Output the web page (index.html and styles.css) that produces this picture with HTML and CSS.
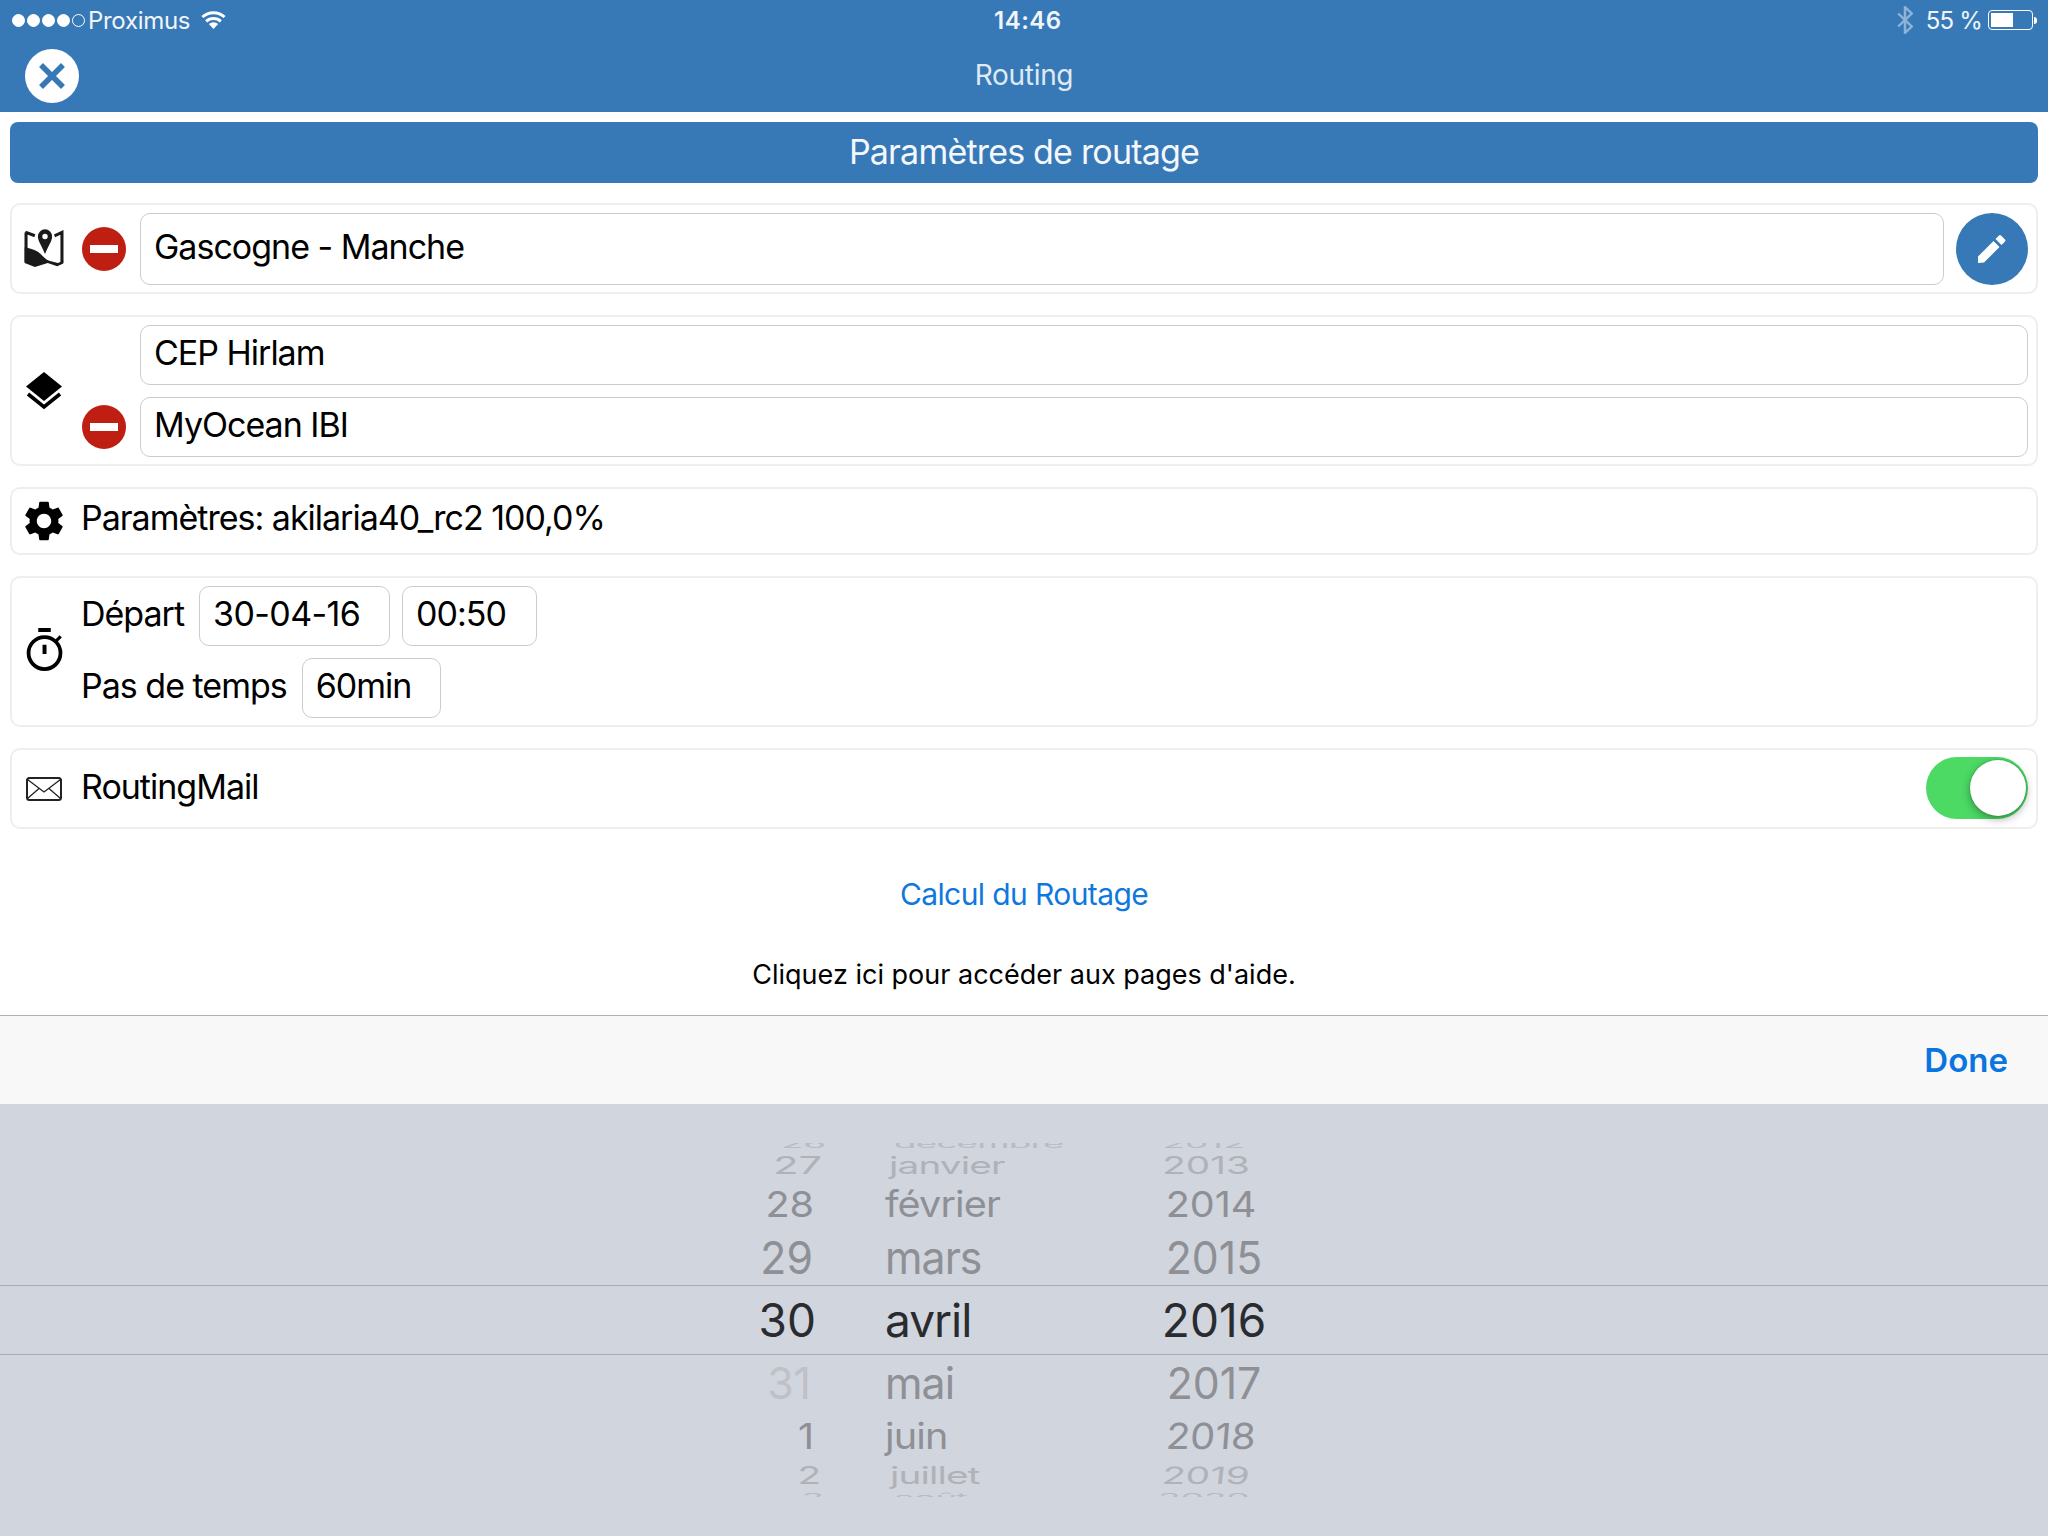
FILE: index.html
```html
<!DOCTYPE html>
<html lang="fr">
<head>
<meta charset="utf-8">
<title>Routing</title>
<link rel="stylesheet" href="styles.css">
</head>
<body>
<header class="header">
  <div class="status">
    <div class="status-left">
      <span class="signal"><i></i><i></i><i></i><i></i><i class="empty"></i></span>
      <span class="carrier">Proximus</span>
      <svg class="wifi" viewBox="0 0 25 18"><path d="M12.500 18L7.800 13a7 7 0 0 1 9.400 0z" fill="#fff"/><path d="M5.200 10.300a10.800 10.800 0 0 1 14.600 0M1.400 6a16.400 16.400 0 0 1 22.200 0" fill="none" stroke="#fff" stroke-width="3"/></svg>
    </div>
    <div class="clock">14:46</div>
    <div class="status-right">
      <svg class="bt" viewBox="1 1 13 26" preserveAspectRatio="none"><path d="M2 8l11 12-5.500 6V2l5.500 6L2 20" fill="none" stroke="#8fb2d6" stroke-width="2"/></svg>
      <span class="pct">55 %</span>
      <span class="battery"><span class="level"></span></span><span class="nub"></span>
    </div>
  </div>
  <div class="nav">
    <span class="close"><svg viewBox="0 0 54 54"><path d="M16 16l22 22M38 16L16 38" stroke="#3779b7" stroke-width="5.500" fill="none"/></svg></span>
    <span class="nav-title">Routing</span>
  </div>
</header>

<main class="main">
  <h1 class="banner">Paramètres de routage</h1>

  <section class="card row-card">
    <svg class="icon map" viewBox="30 24 118 118"><path d="M36 34v88M34 33l28 11M120 44l22-10v88" fill="none" stroke="#1a1a1a" stroke-width="9"/><path d="M32 78c13 3 28 6 40 14 12 8 18 20 32 26l26 6 16-6v8l-18 8-28-10-38 12-30-12z" fill="#1a1a1a"/><path d="M92 25a21 21 0 0 1 21 21c0 14-13 30-21 52-8-22-21-38-21-52a21 21 0 0 1 21-21zm0 13a8 8 0 1 0 0 16 8 8 0 0 0 0-16z" fill="#1a1a1a" fill-rule="evenodd"/></svg>
    <span class="minus"><i></i></span>
    <div class="field grow">Gascogne - Manche</div>
    <span class="edit"><svg viewBox="0 0 30 30"><path d="M1 22.500L16.500 7l6 6L7 28.500l-6 .5zM18.500 5l3.500-3.500a1.500 1.500 0 0 1 2 0l4 4a1.500 1.500 0 0 1 0 2L24.500 11z" fill="#fff"/></svg></span>
  </section>

  <section class="card layers-card">
    <svg class="icon layers" viewBox="0 0 36 38"><path d="M18 0l18 14.500L18 29 0 14.500z" fill="#000"/><path d="M2 22l16 13 16-13" fill="none" stroke="#000" stroke-width="3.600"/></svg>
    <div class="layers-rows">
      <div class="layer-row"><div class="field grow short">CEP Hirlam</div></div>
      <div class="layer-row"><span class="minus"><i></i></span><div class="field grow short">MyOcean IBI</div></div>
    </div>
  </section>

  <section class="card text-card">
    <svg class="icon gear" viewBox="2 1.500 20 21"><path fill-rule="evenodd" d="M19.140 12.940c.04-.3.06-.61.06-.94 0-.32-.02-.64-.07-.94l2.030-1.580c.18-.14.23-.41.12-.61l-1.920-3.320c-.12-.22-.37-.29-.59-.22l-2.390.96c-.5-.38-1.030-.7-1.620-.94l-.36-2.540c-.04-.24-.24-.41-.48-.41h-3.840c-.24 0-.43.17-.47.41l-.36 2.540c-.59.24-1.130.57-1.620.94l-2.390-.96c-.22-.08-.47 0-.59.22L2.740 8.870c-.12.21-.08.47.12.61l2.030 1.580c-.05.3-.09.63-.09.94s.02.64.07.94l-2.030 1.580c-.18.14-.23.41-.12.61l1.920 3.320c.12.22.37.29.59.22l2.390-.96c.5.38 1.030.7 1.620.94l.36 2.540c.05.24.24.41.48.41h3.840c.24 0 .44-.17.47-.41l.36-2.540c.59-.24 1.130-.56 1.620-.94l2.390.96c.22.08.47 0 .59-.22l1.920-3.320c.12-.22.07-.47-.12-.61l-2.010-1.580zM12 15.600c-1.980 0-3.600-1.620-3.600-3.600s1.620-3.600 3.600-3.600 3.600 1.620 3.600 3.600-1.620 3.600-3.600 3.600z" fill="#000"/></svg>
    <span class="label">Paramètres: akilaria40_rc2 100,0%</span>
  </section>

  <section class="card time-card">
    <svg class="icon watch" viewBox="0 0 38 46"><circle cx="19.500" cy="24" r="15.300" fill="none" stroke="#000" stroke-width="3.600"/><path d="M13.500 2h12M19.500 16v9" stroke="#000" stroke-width="3.800" fill="none"/><path d="M30 13l5-5" stroke="#000" stroke-width="3" fill="none"/></svg>
    <div class="time-rows">
      <div class="time-row"><span class="label">Départ</span><div class="field date">30-04-16</div><div class="field hour">00:50</div></div>
      <div class="time-row"><span class="label">Pas de temps</span><div class="field step">60min</div></div>
    </div>
  </section>

  <section class="card mail-card">
    <svg class="icon mail" viewBox="0 0 36 24"><rect x="1" y="1" width="34" height="22" rx="2.500" fill="none" stroke="#222" stroke-width="2"/><path d="M1.500 2.500L18 15 34.500 2.500M1.500 21.500L13 11.500M34.500 21.500L23 11.500" fill="none" stroke="#222" stroke-width="1.300"/></svg>
    <span class="label">RoutingMail</span>
    <span class="toggle"><span class="knob"></span></span>
  </section>

  <a class="action">Calcul du Routage</a>
  <p class="help">Cliquez ici pour accéder aux pages d'aide.</p>
</main>

<div class="toolbar"><span class="done">Done</span></div>

<div class="picker">
  <div class="wheel">
    <div class="col day">
      <div class="item lv4">26</div><div class="item lv3">27</div><div class="item lv2">28</div><div class="item lv1">29</div><div class="item sel">30</div><div class="item lv1b off">31</div><div class="item lv2b">1</div><div class="item lv3b">2</div><div class="item lv4b">3</div>
    </div>
    <div class="col month">
      <div class="item lv4">décembre</div><div class="item lv3">janvier</div><div class="item lv2">février</div><div class="item lv1">mars</div><div class="item sel">avril</div><div class="item lv1b">mai</div><div class="item lv2b">juin</div><div class="item lv3b">juillet</div><div class="item lv4b">août</div>
    </div>
    <div class="col year">
      <div class="item lv4">2012</div><div class="item lv3">2013</div><div class="item lv2">2014</div><div class="item lv1">2015</div><div class="item sel">2016</div><div class="item lv1b">2017</div><div class="item lv2b">2018</div><div class="item lv3b">2019</div><div class="item lv4b">2020</div>
    </div>
  </div>
  <div class="sel-lines"></div>
</div>
</body>
</html>
```
FILE: styles.css
```css
* { box-sizing: border-box; }
html, body { margin: 0; height: 100%; }
body {
  display: flex;
  flex-direction: column;
  height: 1536px;
  overflow: hidden;
  background: #fff;
  color: #000;
  font-family: Inter, "Liberation Sans", sans-serif;
}

/* header */
.header { background: #3779b7; color: #fff; height: 112px; }
.status { display: flex; align-items: center; justify-content: space-between; height: 40px; padding: 0 11px 0 12px; position: relative; font-size: 24px; }
.status-left, .status-right { display: flex; align-items: center; }
.signal { display: flex; gap: 2px; margin-right: 3px; }
.signal i { width: 13px; height: 13px; border-radius: 50%; background: #fff; border: 1px solid #fff; }
.signal i.empty { background: none; }
.carrier { color: #f1f5fa; letter-spacing: -.3px; }
.wifi { width: 25px; height: 18px; margin-left: 11px; }
.clock { font-weight: 600; font-size: 24px; position: absolute; left: 994px; letter-spacing: .5px; color: #f1f5fa; }
.bt { width: 16px; height: 28px; margin-right: 13px; }
.pct { margin-right: 6px; color: #f1f5fa; letter-spacing: -.8px; }
.battery { width: 45px; height: 20px; border: 1.500px solid #fff; border-radius: 4px; padding: 2px; display: block; }
.level { display: block; width: 22px; height: 100%; background: #fff; }
.nub { width: 3px; height: 7px; background: #fff; border-radius: 0 3px 3px 0; margin-left: 1px; }
.nav { position: relative; height: 72px; display: flex; align-items: center; justify-content: center; }
.close { position: absolute; left: 25px; top: 9px; width: 54px; height: 54px; border-radius: 50%; background: #fff; display: block; }
.close svg { display: block; width: 54px; height: 54px; }
.nav-title { font-size: 28px; color: #dfe9f3; margin-top: -2px; letter-spacing: -.3px; }

/* main */
.main { padding: 10px 10px 0; height: 903px; display: flex; flex-direction: column; }
.banner { margin: 0 0 20px; height: 61px; line-height: 60px; background: #3779b7; color: #f4f7fb; border-radius: 8px; text-align: center; font-size: 34px; font-weight: 400; letter-spacing: -.8px; }
.card { border: 2px solid #eeeeee; border-radius: 10px; margin-bottom: 21px; display: flex; align-items: center; padding-left: 12px; }
.icon { display: block; flex: none; }
.field { border: 1.500px solid #cccccc; border-radius: 10px; padding: 0 13px 4px; font-size: 34px; letter-spacing: -1px; display: flex; align-items: center; height: 60px; }
.grow { flex: 1; }
.label { font-size: 34px; letter-spacing: -1px; padding-bottom: 4px; }
.minus { width: 44px; height: 44px; border-radius: 50%; background: #bf1f12; display: flex; align-items: center; justify-content: center; flex: none; }
.minus i { width: 28px; height: 8px; background: #fff; display: block; }

.row-card { height: 91px; padding-right: 8px; }
.map { width: 40px; height: 40px; }
.row-card .minus { margin: 0 14px 0 18px; }
.row-card .field { height: 72px; }
.edit { width: 72px; height: 72px; border-radius: 50%; background: #3779b7; margin-left: 12px; display: flex; align-items: center; justify-content: center; flex: none; }
.edit svg { width: 30px; height: 30px; }

.layers-card { height: 151px; padding-right: 8px; }
.layers { width: 36px; height: 38px; margin-left: 2px; }
.layers-rows { flex: 1; display: flex; flex-direction: column; gap: 12px; margin-left: 20px; }
.layer-row { display: flex; align-items: center; padding-left: 58px; }
.layer-row .minus { margin: 0 14px 0 -58px; }

.text-card { height: 68px; }
.gear { width: 40px; height: 42px; }
.text-card .label { margin-left: 17px; padding-bottom: 8px; }

.time-card { height: 151px; }
.watch { width: 40px; height: 48px; }
.time-rows { margin-left: 17px; display: flex; flex-direction: column; gap: 12px; }
.time-row { display: flex; align-items: center; gap: 12px; }
.time-row .label { margin-right: 3px; }
.date { width: 191px; letter-spacing: -.6px; }
.hour { width: 135px; }
.step { width: 139px; }

.mail-card { height: 81px; padding-right: 8px; }
.mail { width: 36px; height: 24px; margin-left: 2px; }
.mail-card .label { margin-left: 19px; flex: 1; }
.toggle { width: 102px; height: 62px; border-radius: 31px; background: #4cd964; position: relative; display: block; margin-top: -2px; }
.knob { position: absolute; right: 2px; top: 3px; width: 56px; height: 56px; border-radius: 50%; background: #fff; box-shadow: 0 3px 8px rgba(0,0,0,.35), 0 0 0 1px rgba(0,0,0,.08); }

.action { text-align: center; color: #0f78dc; font-size: 30px; letter-spacing: -.6px; margin-top: 24px; line-height: 40px; }
.help { margin: 41px 0 0; text-align: center; font-size: 27px; line-height: 40px; }

/* toolbar */
.toolbar { height: 89px; background: #f8f8f8; border-top: 1.500px solid #b2b2b2; display: flex; align-items: center; justify-content: flex-end; padding-right: 40px; }
.done { color: #0a75e0; font-size: 33px; font-weight: 600; }

/* picker */
.picker { flex: 1; background: #d1d5dd; padding-top: 39px; position: relative; }
.wheel { display: flex; height: 354px; overflow: hidden; font-size: 46px; color: #8e9095; }
.col { display: flex; flex-direction: column; }
.day { width: 814px; text-align: right; }
.month { width: 271px; padding-left: 71px; letter-spacing: -1px; }
.year { width: 258px; text-align: center; }
.day .item { transform-origin: right center; }
.month .item { transform-origin: left center; }
.item { white-space: nowrap; display: flex; align-items: center; flex: none; }
.day .item { justify-content: flex-end; }
.year .item { justify-content: center; }
.lv4 { height: 7px; transform: translateY(-3px) scale(.8, .24); color: #b9bbc1; }
.lv3 { height: 30px; transform: scale(.84, .52); color: #b0b2b8; }
.lv2 { height: 47px; transform: scale(.86, .78); }
.lv1 { height: 60px; transform: scale(.93, .98); }
.sel { height: 66px; color: #2a2b2e; }
.lv1b { height: 60px; transform: scale(.93, .95); }
.lv2b { height: 46px; transform: scale(.86, .78); }
.lv3b { height: 32px; transform: scale(.84, .52); color: #b0b2b8; }
.lv4b { height: 7px; transform: translateY(3px) scale(.8, .24); color: #b9bbc1; }
.off { color: #bfc1c7; }

/* the wheel's columns bend away from the centre line */
.day .lv4 { transform: translate(12px, -3px) scale(.8, .24); }
.day .lv3 { transform: translateX(8px) scale(.9, .52); }
.day .lv1 { transform: translateX(-1px) scale(.93, .98); }
.day .sel { transform: translateX(2px); }
.day .lv1b { transform: translateX(-3px) scale(.93, .95); }
.day .lv3b { transform: translateX(7px) scale(.84, .52); }
.day .lv4b { transform: translate(10px, 3px) scale(.8, .24); }
.month .lv4 { transform: translate(9px, -3px) scale(.8, .24); }
.month .lv3 { transform: translateX(4px) scale(.84, .52); }
.month .lv3b { transform: translateX(5px) scale(.84, .52); }
.month .lv4b { transform: translate(9px, 3px) scale(.8, .24); }
.year .lv4 { transform: translate(-10px, -3px) scale(.8, .24); }
.year .lv3 { transform: translateX(-8px) scale(.84, .52); }
.year .lv2 { transform: translateX(-3px) scale(.86, .78); }
.year .lv2b { transform: translateX(-3px) scale(.86, .78) skewX(-4deg); }
.year .lv3b { transform: translateX(-8px) scale(.84, .52) skewX(-4deg); }
.year .lv4b { transform: translate(-10px, 3px) scale(.8, .24); }

.sel-lines { position: absolute; left: 0; right: 0; top: 181px; height: 70px; border-top: 1.500px solid #a9abb3; border-bottom: 1.500px solid #a9abb3; }
```
